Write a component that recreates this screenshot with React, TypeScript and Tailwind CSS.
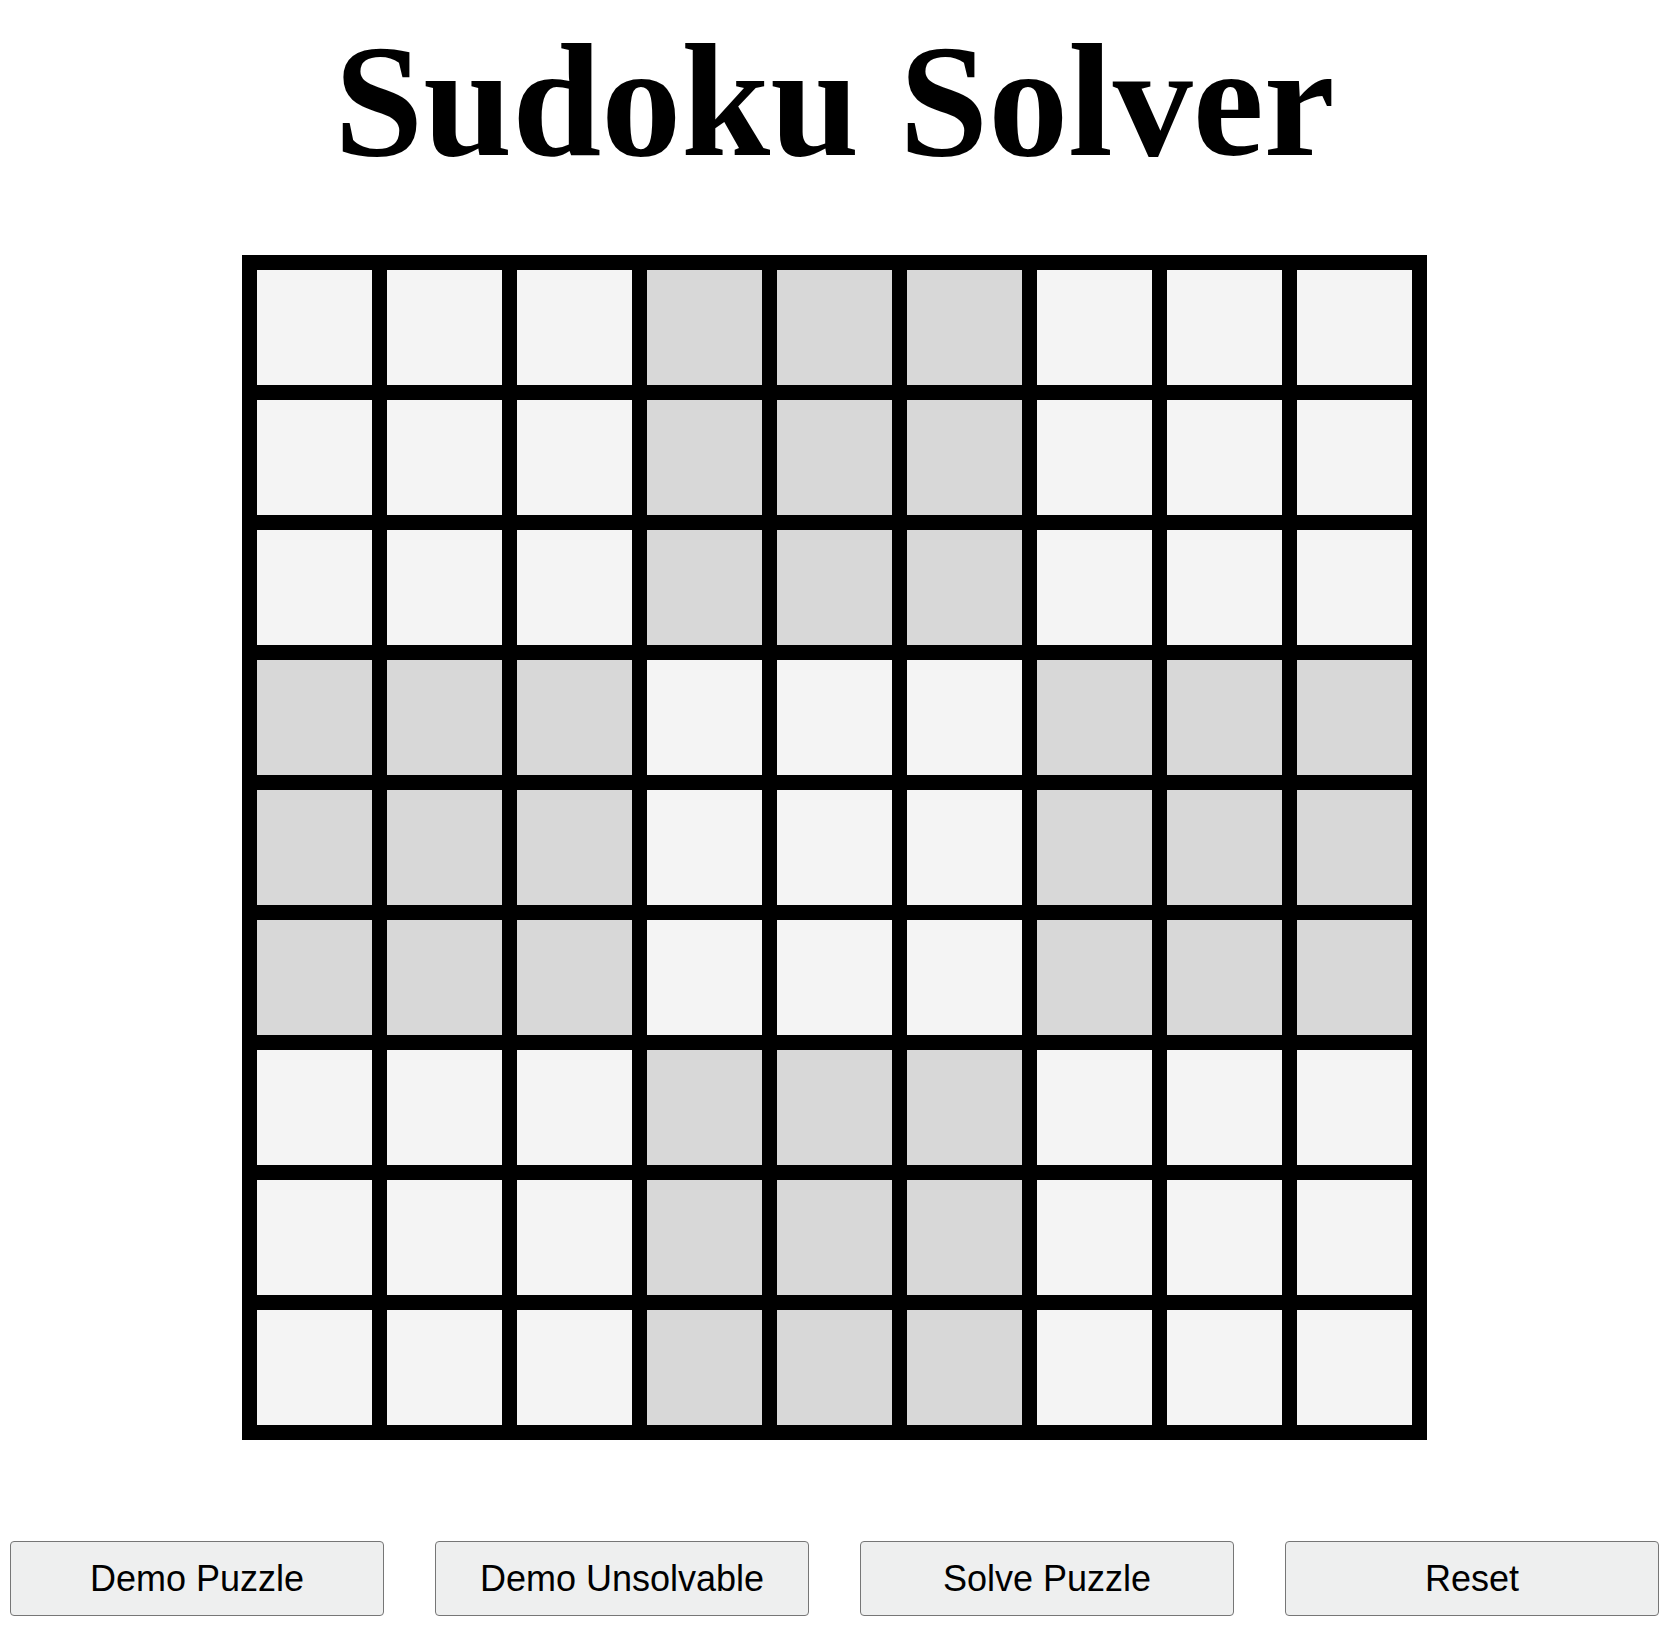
const BOXES_DARK = (r: number, c: number) => (Math.floor(r / 3) + Math.floor(c / 3)) % 2 === 1;

const Cell = ({ dark }: { dark: boolean }) => (
  <div className={dark ? "w-[115px] h-[115px] bg-[#d8d8d8]" : "w-[115px] h-[115px] bg-[#f4f4f4]"} />
);

const Board = () => {
  const cells = [];
  for (let r = 0; r < 9; r++) {
    for (let c = 0; c < 9; c++) {
      cells.push(<Cell key={`${r}-${c}`} dark={BOXES_DARK(r, c)} />);
    }
  }
  return (
    <div className="grid grid-cols-[repeat(9,115px)] gap-[15px] p-[15px] bg-black">
      {cells}
    </div>
  );
};

const buttons = ["Demo Puzzle", "Demo Unsolvable", "Solve Puzzle", "Reset"];

export default function App() {
  return (
    <div className="min-h-[1630px] bg-white font-['Liberation_Sans',Arial,sans-serif] text-black">
      <div className="w-[1669px]">
        <h1 className="pt-[21px] text-center font-['Liberation_Serif','Times_New_Roman',serif] text-[160px] font-bold leading-none">
          Sudoku Solver
        </h1>

        <div className="mt-[74px] flex justify-center">
          <Board />
        </div>

        <div className="mt-[101px] flex justify-between px-[10px]">
          {buttons.map((label) => (
            <button
              key={label}
              className="w-[374px] h-[75px] rounded-[4px] border border-[#767676] bg-[#eeefef] text-[36px] text-black"
            >
              {label}
            </button>
          ))}
        </div>
      </div>
    </div>
  );
}
